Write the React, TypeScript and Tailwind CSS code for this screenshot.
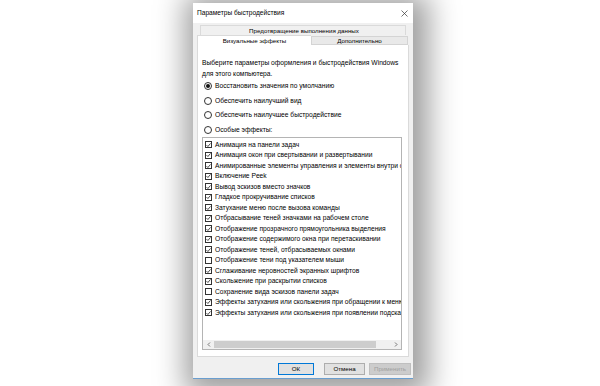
const font = { fontFamily: '"Liberation Sans", Arial, sans-serif' };

const effects: [string, boolean][] = [
  ["Анимация на панели задач", true],
  ["Анимация окон при свертывании и развертывании", true],
  ["Анимированные элементы управления и элементы внутри окна", true],
  ["Включение Peek", true],
  ["Вывод эскизов вместо значков", true],
  ["Гладкое прокручивание списков", true],
  ["Затухание меню после вызова команды", true],
  ["Отбрасывание теней значками на рабочем столе", true],
  ["Отображение прозрачного прямоугольника выделения", true],
  ["Отображение содержимого окна при перетаскивании", true],
  ["Отображение теней, отбрасываемых окнами", true],
  ["Отображение тени под указателем мыши", false],
  ["Сглаживание неровностей экранных шрифтов", true],
  ["Скольжение при раскрытии списков", true],
  ["Сохранение вида эскизов панели задач", false],
  ["Эффекты затухания или скольжения при обращении к меню", true],
  ["Эффекты затухания или скольжения при появлении подсказок", true],
];

const radios = [
  "Восстановить значения по умолчанию",
  "Обеспечить наилучший вид",
  "Обеспечить наилучшее быстродействие",
  "Особые эффекты:",
];

function Check({ on }: { on: boolean }) {
  return (
    <div className="w-[7px] h-[7px] border border-[#333] bg-white shrink-0 flex items-center justify-center">
      {on && (
        <svg width="6" height="6" viewBox="0 0 6 6">
          <path d="M0.6 3.1 L2.3 4.8 L5.4 1.1" fill="none" stroke="#111" strokeWidth="0.9" />
        </svg>
      )}
    </div>
  );
}

export default function App() {
  return (
    <div className="w-[600px] h-[386px] bg-white pt-[3px] pl-[193px] overflow-hidden" style={font}>
      <div className="w-[220px] h-[376px] flex flex-col bg-[#f0f0f0] border-b border-[#6a9ecf] shadow-[4px_4px_28px_12px_rgba(0,0,0,0.38)] text-black">
        <div className="h-[20px] bg-white flex items-center justify-between pl-[4px] pr-[5px]">
          <span className="text-[6.6px]">Параметры быстродействия</span>
          <svg width="7" height="7" viewBox="0 0 7 7">
            <path d="M0.5 0.5 L6.5 6.5 M6.5 0.5 L0.5 6.5" stroke="#333" strokeWidth="0.7" />
          </svg>
        </div>
        <div className="flex-1 flex flex-col px-[4px] pt-[2px]">
          <div className="h-[10px] mx-[3px] bg-[#f0f0f0] border-t border-x border-[#dadada] flex items-center justify-center text-[6.2px] pl-[2px] whitespace-nowrap">
            Предотвращение выполнения данных
          </div>
          <div className="h-[10px] flex text-[6.2px] whitespace-nowrap">
            <div className="w-[114px] bg-white border-t border-l border-[#dadada] flex items-center justify-center">
              Визуальные эффекты
            </div>
            <div className="flex-1 mr-[1px] mt-[1px] bg-[#e9e9e9] border border-[#d4d4d4] flex items-center justify-center">
              Дополнительно
            </div>
          </div>
          <div className="h-[312px] bg-white border-x border-b border-[#dadada] px-[4px] pt-[13px] flex flex-col">
            <p className="text-[6.7px] leading-[10.5px] whitespace-nowrap">
              Выберите параметры оформления и быстродействия Windows
              <br />
              для этого компьютера.
            </p>
            <div className="flex flex-col">
              {radios.map((r, i) => (
                <div key={r} className="h-[14.5px] flex items-center gap-[3px] pl-[2px] text-[6.7px] whitespace-nowrap">
                  <div className="w-[8px] h-[8px] rounded-full border border-[#333] bg-white flex items-center justify-center">
                    {i === 0 && <div className="w-[4px] h-[4px] rounded-full bg-[#111]" />}
                  </div>
                  <span>{r}</span>
                </div>
              ))}
            </div>
            <div className="h-[213px] border border-[#b4b4b4] flex flex-col overflow-hidden mr-[2px]">
              <div className="flex-1 pt-[1.5px] overflow-hidden">
                {effects.map(([t, on]) => (
                  <div key={t} className="h-[10.5px] flex items-center gap-[3px] pl-[2px] text-[6.7px] whitespace-nowrap">
                    <Check on={on} />
                    <span>{t}</span>
                  </div>
                ))}
              </div>
              <div className="h-[9px] bg-[#f0f0f0] flex items-center">
                <div className="w-[11px] flex justify-center">
                  <svg width="4" height="5" viewBox="0 0 4 5">
                    <path d="M3 0.5 L1 2.5 L3 4.5" fill="none" stroke="#555" strokeWidth="0.8" />
                  </svg>
                </div>
                <div className="flex-1 h-[7px] bg-[#cdcdcd] mr-[14px]" />
                <div className="w-[11px] flex justify-center">
                  <svg width="4" height="5" viewBox="0 0 4 5">
                    <path d="M1 0.5 L3 2.5 L1 4.5" fill="none" stroke="#555" strokeWidth="0.8" />
                  </svg>
                </div>
              </div>
            </div>
          </div>
          <div className="mt-[6px] h-[12px] flex justify-end gap-[4px] text-[6.2px] -mr-[2px] whitespace-nowrap">
            <div className="w-[36px] bg-[#e1e1e1] border border-[#0078d7] flex items-center justify-center mr-[6px]">ОК</div>
            <div className="w-[41px] bg-[#e1e1e1] border border-[#adadad] flex items-center justify-center">Отмена</div>
            <div className="w-[42px] bg-[#cccccc] border border-[#bfbfbf] text-[#a0a0a0] flex items-center justify-center">Применить</div>
          </div>
        </div>
      </div>
    </div>
  );
}
